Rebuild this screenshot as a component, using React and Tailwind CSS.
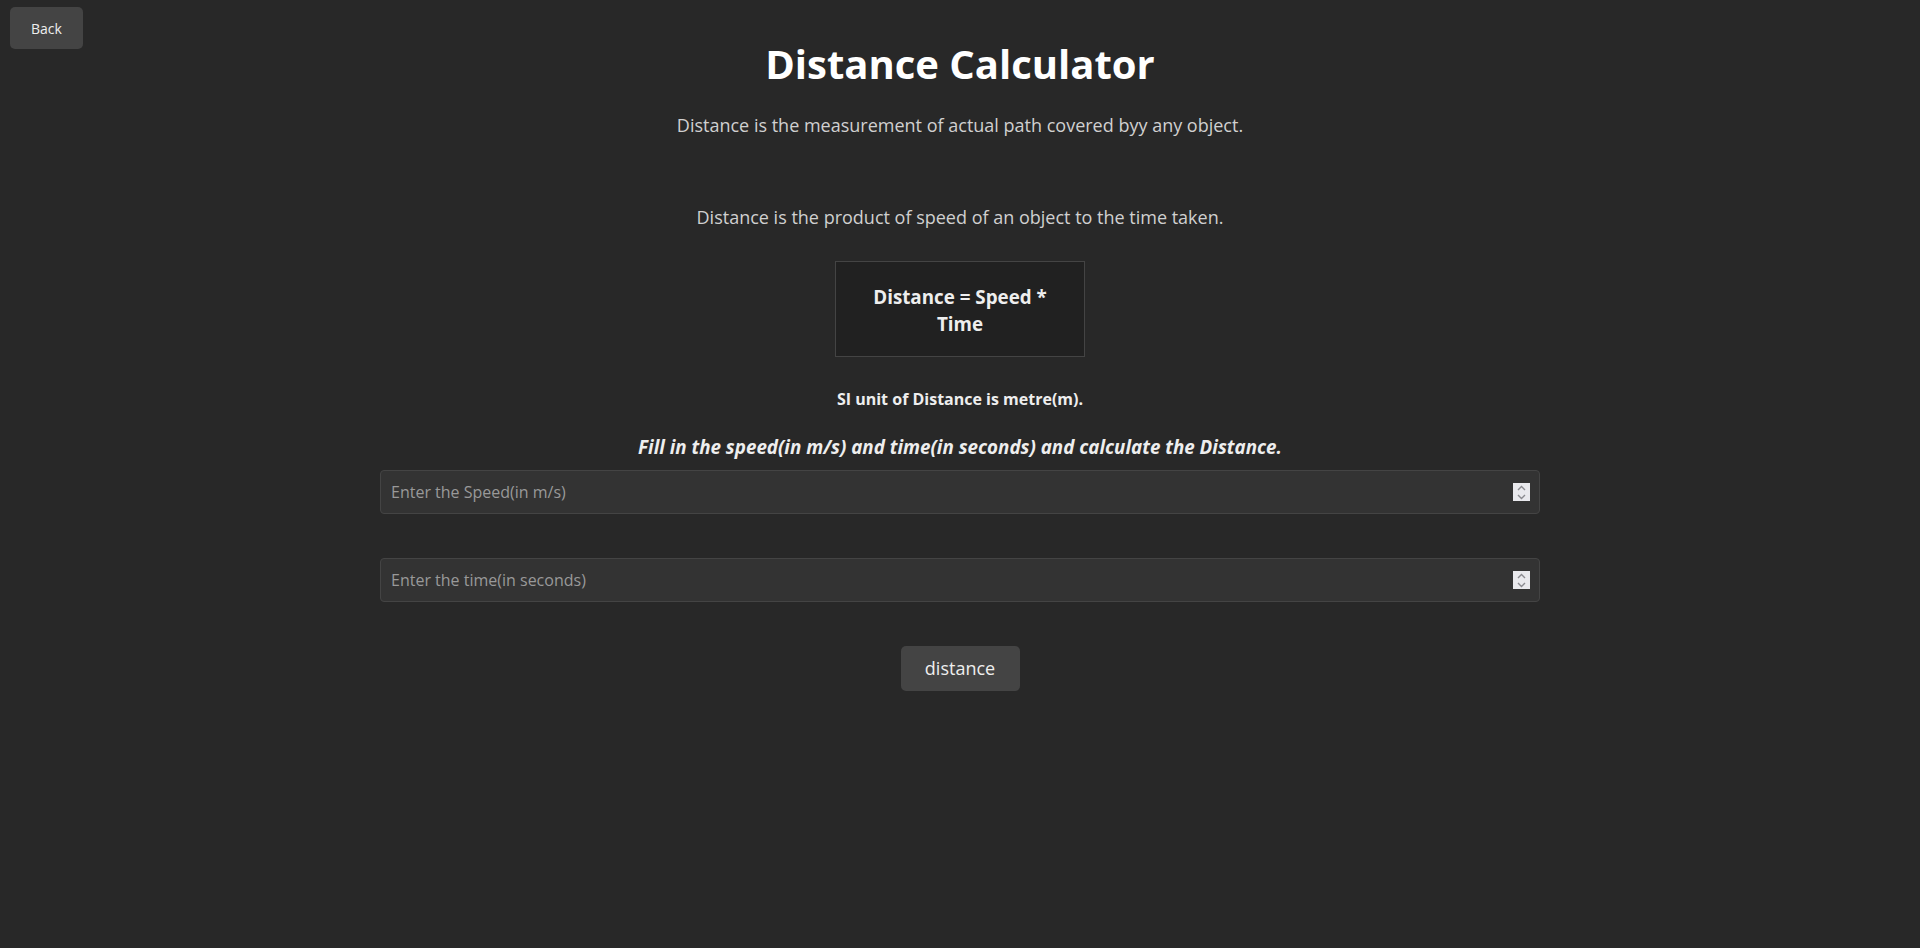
import { useState } from "react";

// Always-visible spinner, drawn like the native stepper in the reference
const Stepper = ({ onStep }) => (
  <div className="absolute right-[10px] top-1/2 -translate-y-1/2 w-[17px] h-[18px] flex flex-col bg-[#e9e9ed]">
    <button
      type="button"
      tabIndex={-1}
      onClick={() => onStep(1)}
      className="flex-1 flex items-center justify-center"
    >
      <svg width="9" height="6" viewBox="0 0 9 6" fill="none">
        <path d="M1 5 L4.5 1.5 L8 5" stroke="#8a8a8f" strokeWidth="1.4" />
      </svg>
    </button>
    <button
      type="button"
      tabIndex={-1}
      onClick={() => onStep(-1)}
      className="flex-1 flex items-center justify-center"
    >
      <svg width="9" height="6" viewBox="0 0 9 6" fill="none">
        <path d="M1 1 L4.5 4.5 L8 1" stroke="#8a8a8f" strokeWidth="1.4" />
      </svg>
    </button>
  </div>
);

const NumberField = ({ value, onChange, placeholder }) => {
  const step = (d) => {
    const n = parseFloat(value);
    onChange(String((isNaN(n) ? 0 : n) + d));
  };
  return (
    <div className="relative">
      <input
        type="number"
        value={value}
        onChange={(e) => onChange(e.target.value)}
        placeholder={placeholder}
        className="h-[44px] w-full pl-[10px] pr-[36px] rounded-[4px] bg-[#333333] border border-[#444444] text-[16px] text-[#dddddd] placeholder:text-[#999999] outline-none [appearance:textfield] [&::-webkit-inner-spin-button]:appearance-none [&::-webkit-outer-spin-button]:appearance-none"
      />
      <Stepper onStep={step} />
    </div>
  );
};

const App = () => {
  const [speed, setSpeed] = useState("");
  const [time, setTime] = useState("");
  const [result, setResult] = useState(null);

  const calculate = () => {
    const s = parseFloat(speed);
    const t = parseFloat(time);
    if (isNaN(s) || isNaN(t)) return;
    setResult(s * t);
  };

  return (
    <div
      className="min-h-screen bg-[#282828] text-[#d4d4d4] pt-[7px]"
      style={{ fontFamily: '"Open Sans", "Noto Sans", sans-serif' }}
    >
      {/* Header */}
      <div className="grid grid-cols-[1fr_auto_1fr] items-start px-[10px]">
        <div>
          <button className="w-[73px] h-[42px] rounded-[5px] bg-[#444444] text-[14px] text-[#eeeeee]">
            Back
          </button>
        </div>
        <h1 className="mt-[30px] text-[40px] leading-[54px] font-bold text-white text-center">
          Distance Calculator
        </h1>
        <div></div>
      </div>

      <div className="flex flex-col items-center">
        <p className="mt-[21px] text-[18px] leading-[27px] text-[#d0d0d0]">
          Distance is the measurement of actual path covered byy any object.
        </p>

        <p className="mt-[65px] text-[18px] leading-[27px] text-[#d0d0d0]">
          Distance is the product of speed of an object to the time taken.
        </p>

        <div className="mt-[30px] w-[250px] h-[96px] flex items-center justify-center px-[30px] pt-[3px] bg-[#212121] border border-[#444444]">
          <p className="text-[18.8px] leading-[27px] font-bold text-[#eeeeee] text-center">
            Distance = Speed * Time
          </p>
        </div>

        <p className="mt-[32px] text-[16px] leading-[20px] font-bold text-[#eeeeee]">
          SI unit of Distance is metre(m).
        </p>

        <p className="mt-[25px] text-[18.8px] leading-[26px] font-bold italic text-[#eeeeee]">
          Fill in the speed(in m/s) and time(in seconds) and calculate the Distance.
        </p>

        <div className="mt-[10px] w-[1160px] flex flex-col gap-[44px]">
          <NumberField value={speed} onChange={setSpeed} placeholder="Enter the Speed(in m/s)" />
          <NumberField value={time} onChange={setTime} placeholder="Enter the time(in seconds)" />
        </div>

        <button
          onClick={calculate}
          className="mt-[44px] w-[119px] h-[45px] rounded-[5px] bg-[#444444] text-[18px] text-[#eeeeee]"
        >
          distance
        </button>

        {result !== null && (
          <p className="mt-[20px] text-[18px] text-[#eeeeee]">Distance = {result} m</p>
        )}
      </div>
    </div>
  );
};

export default App;
